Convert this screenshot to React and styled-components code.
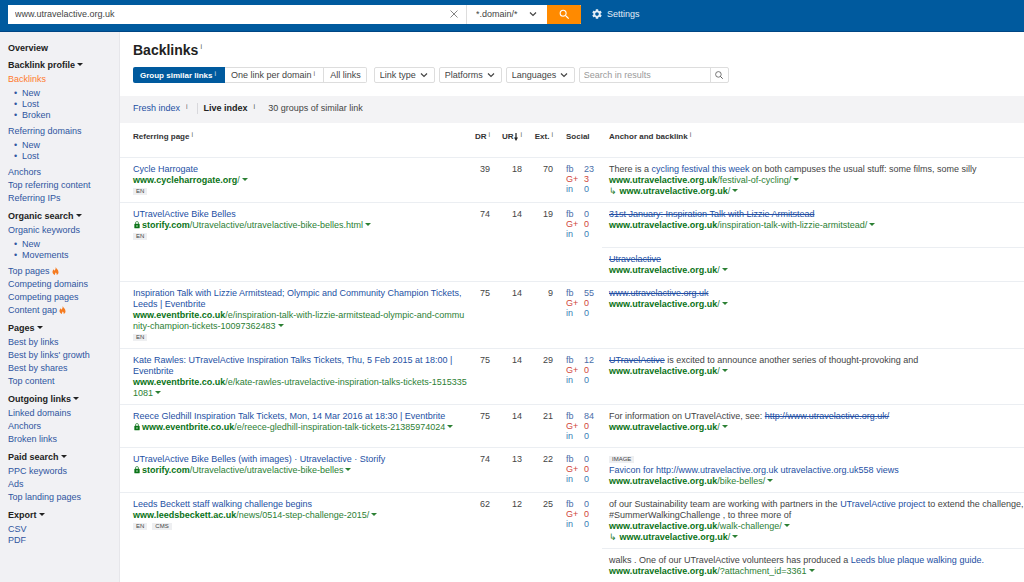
import styled, { createGlobalStyle, css } from 'styled-components';
import { MdLock, MdSearch, MdSettings } from 'react-icons/md';

const menu = [
  {
    title: 'Backlink profile',
    items: [
      { name: 'Backlinks', active: true, sub: ['New', 'Lost', 'Broken'] },
      { name: 'Referring domains', sub: ['New', 'Lost'] },
      { name: 'Anchors' },
      { name: 'Top referring content' },
      { name: 'Referring IPs' },
    ],
  },
  {
    title: 'Organic search',
    items: [
      { name: 'Organic keywords', sub: ['New', 'Movements'] },
      { name: 'Top pages', hot: true },
      { name: 'Competing domains' },
      { name: 'Competing pages' },
      { name: 'Content gap', hot: true },
    ],
  },
  {
    title: 'Pages',
    items: [
      { name: 'Best by links' },
      { name: "Best by links' growth" },
      { name: 'Best by shares' },
      { name: 'Top content' },
    ],
  },
  {
    title: 'Outgoing links',
    items: [{ name: 'Linked domains' }, { name: 'Anchors' }, { name: 'Broken links' }],
  },
  {
    title: 'Paid search',
    items: [{ name: 'PPC keywords' }, { name: 'Ads' }, { name: 'Top landing pages' }],
  },
  {
    title: 'Export',
    dense: true,
    items: [{ name: 'CSV' }, { name: 'PDF' }],
  },
];

const SITE = 'www.utravelactive.org.uk';

const rows = [
  {
    title: 'Cycle Harrogate',
    host: 'www.cycleharrogate.org',
    path: '/',
    tags: ['EN'],
    dr: 39, ur: 18, ext: 70,
    social: [23, 3, 0],
    anchors: [
      {
        before: 'There is a ',
        link: 'cycling festival this week',
        after: ' on both campuses the usual stuff: some films, some silly',
        path: '/festival-of-cycling/',
        redirect: true,
      },
    ],
  },
  {
    title: 'UTravelActive Bike Belles',
    secure: true,
    host: 'storify.com',
    path: '/Utravelactive/utravelactive-bike-belles.html',
    tags: ['EN'],
    dr: 74, ur: 14, ext: 19,
    social: [0, 0, 0],
    anchors: [
      {
        link: '31st January: Inspiration Talk with Lizzie Armitstead',
        lost: true,
        path: '/inspiration-talk-with-lizzie-armitstead/',
      },
      { link: 'Utravelactive', lost: true, path: '/' },
    ],
  },
  {
    title: 'Inspiration Talk with Lizzie Armitstead; Olympic and Community Champion Tickets, Leeds | Eventbrite',
    host: 'www.eventbrite.co.uk',
    path: '/e/inspiration-talk-with-lizzie-armitstead-olympic-and-community-champion-tickets-10097362483',
    tags: ['EN'],
    dr: 75, ur: 14, ext: 9,
    social: [55, 0, 0],
    anchors: [{ link: 'www.utravelactive.org.uk', lost: true, path: '/' }],
  },
  {
    title: 'Kate Rawles: UTravelActive Inspiration Talks Tickets, Thu, 5 Feb 2015 at 18:00 | Eventbrite',
    host: 'www.eventbrite.co.uk',
    path: '/e/kate-rawles-utravelactive-inspiration-talks-tickets-15153351081',
    dr: 75, ur: 14, ext: 29,
    social: [12, 0, 0],
    anchors: [
      {
        link: 'UTravelActive',
        lost: true,
        after: ' is excited to announce another series of thought-provoking and',
        path: '/',
      },
    ],
  },
  {
    title: 'Reece Gledhill Inspiration Talk Tickets, Mon, 14 Mar 2016 at 18:30 | Eventbrite',
    secure: true,
    host: 'www.eventbrite.co.uk',
    path: '/e/reece-gledhill-inspiration-talk-tickets-21385974024',
    dr: 75, ur: 14, ext: 21,
    social: [84, 0, 0],
    anchors: [
      {
        before: 'For information on UTravelActive, see: ',
        link: 'http://www.utravelactive.org.uk/',
        lost: true,
        path: '/',
      },
    ],
  },
  {
    title: 'UTravelActive Bike Belles (with images) · Utravelactive · Storify',
    secure: true,
    host: 'storify.com',
    path: '/Utravelactive/utravelactive-bike-belles',
    dr: 74, ur: 13, ext: 22,
    social: [0, 0, 0],
    anchors: [
      {
        tag: 'IMAGE',
        link: 'Favicon for http://www.utravelactive.org.uk utravelactive.org.uk558 views',
        path: '/bike-belles/',
      },
    ],
  },
  {
    title: 'Leeds Beckett staff walking challenge begins',
    host: 'www.leedsbeckett.ac.uk',
    path: '/news/0514-step-challenge-2015/',
    tags: ['EN', 'CMS'],
    dr: 62, ur: 12, ext: 25,
    social: [0, 0, 0],
    anchors: [
      {
        before: 'of our Sustainability team are working with partners in the ',
        link: 'UTravelActive project',
        after: ' to extend the challenge, #SummerWalkingChallenge , to three more of',
        path: '/walk-challenge/',
        redirect: true,
      },
      {
        before: 'walks . One of our UTravelActive volunteers has produced a ',
        link: 'Leeds blue plaque walking guide.',
        path: '/?attachment_id=3361',
      },
    ],
  },
];

const networks = [
  { name: 'fb', color: '#4a6ea9' },
  { name: 'G+', color: '#d0453a' },
  { name: 'in', color: '#3a7db5' },
];

const Chevron = () => (
  <ChevronSvg viewBox="0 0 8 8" aria-hidden="true">
    <path d="M1 2.5 4 5.5 7 2.5" fill="none" stroke="#444" strokeWidth="1.2" />
  </ChevronSvg>
);

const Flame = () => (
  <FlameSvg viewBox="0 0 14 16" aria-hidden="true">
    <path
      d="M7.4 0C8.300 3.200 13 5.600 13 10.400c0 2.600-1.400 4.600-3.800 5.600.6-1.800.2-3.600-2-5-.2 1.600-1.800 3-1.200 5C3 15.200 1 13.200 1 10.200 1 7.800 2.200 6.600 3 4.600c1 .8 1.400 1.600 1.600 2.800C6.800 5.600 7.800 3 7.400 0Z"
      fill="#f57b20"
    />
  </FlameSvg>
);

const Drop = ({ label }) => (
  <SelectBox>
    <Select aria-label={label} defaultValue={label}>
      <option>{label}</option>
    </Select>
    <Chevron />
  </SelectBox>
);

const Url = ({ secure, redirect, host, path }) => (
  <UrlLine>
    {secure && <Lock aria-hidden="true" />}
    {redirect && '↳ '}
    <a href="#"><b>{host}</b>{path}</a>
    <Caret />
  </UrlLine>
);

const AnchorCell = ({ anchor }) => (
  <Cell $anchor>
    {anchor.tag && <TagLine><Tag>{anchor.tag}</Tag></TagLine>}
    <div>
      {anchor.before}
      <TextLink href="#" $lost={anchor.lost}>{anchor.link}</TextLink>
      {anchor.after}
    </div>
    <Url host={SITE} path={anchor.path} />
    {anchor.redirect && <Url redirect host={SITE} path="/" />}
  </Cell>
);

const Row = ({ row }) => (
  <>
    <tr>
      <Cell $first>
        <div><TextLink href="#">{row.title}</TextLink></div>
        <Url secure={row.secure} host={row.host} path={row.path} />
        {row.tags && (
          <TagLine>{row.tags.map((tag) => <Tag key={tag}>{tag}</Tag>)}</TagLine>
        )}
      </Cell>
      <Cell $num>{row.dr}</Cell>
      <Cell $num>{row.ur}</Cell>
      <Cell $num>{row.ext}</Cell>
      <Cell $social>
        {networks.map((net, i) => (
          <Social key={net.name} $color={net.color}>
            <span>{net.name}</span>
            <span>{row.social[i]}</span>
          </Social>
        ))}
      </Cell>
      <AnchorCell anchor={row.anchors[0]} />
    </tr>
    {row.anchors.slice(1).map((anchor) => (
      <tr key={anchor.link}>
        <td colSpan={5}></td>
        <AnchorCell anchor={anchor} />
      </tr>
    ))}
  </>
);

const App = () => {
  return <>
    <Global />
    <TopBar>
      <SearchForm onSubmit={(e) => e.preventDefault()}>
        <Target type="text" aria-label="Domain or URL" defaultValue="www.utravelactive.org.uk" />
        <Clear type="button" aria-label="Clear">
          <svg viewBox="0 0 8 8" width="8" height="8">
            <path d="M.5.5l7 7M7.500.5l-7 7" stroke="#777" strokeWidth=".9" />
          </svg>
        </Clear>
        <ModeBox>
          <Mode aria-label="Mode" defaultValue="*.domain/*">
            <option>*.domain/*</option>
          </Mode>
          <Chevron />
        </ModeBox>
        <Go type="submit" aria-label="Search"><MdSearch size={13} /></Go>
      </SearchForm>
      <Settings href="#"><MdSettings size={12} />Settings</Settings>
    </TopBar>

    <Layout>
      <Sidebar>
        <Overview href="#">Overview</Overview>
        {menu.map((group) => (
          <Group key={group.title}>
            <GroupTitle>{group.title}<Caret $dark /></GroupTitle>
            <Items>
              {group.items.map((item) => (
                <Item key={item.name} $dense={group.dense}>
                  <MenuLink href="#" $active={item.active}>{item.name}</MenuLink>
                  {item.hot && <Flame />}
                  {item.sub && (
                    <SubItems>
                      {item.sub.map((name) => (
                        <li key={name}><MenuLink href="#">{name}</MenuLink></li>
                      ))}
                    </SubItems>
                  )}
                </Item>
              ))}
            </Items>
          </Group>
        ))}
      </Sidebar>

      <Main>
        <Title>Backlinks<Info>i</Info></Title>
        <Filters>
          <Segments>
            <Segment type="button" $on>Group similar links<Info>i</Info></Segment>
            <Segment type="button">One link per domain<Info>i</Info></Segment>
            <Segment type="button">All links</Segment>
          </Segments>
          <Drop label="Link type" />
          <Drop label="Platforms" />
          <Drop label="Languages" />
          <ResultSearch onSubmit={(e) => e.preventDefault()}>
            <ResultInput type="text" aria-label="Search in results" placeholder="Search in results" />
            <ResultButton type="submit" aria-label="Find">
              <svg viewBox="0 0 8 8" width="8" height="8">
                <circle cx="3.4" cy="3.4" r="2.800" fill="none" stroke="#555" strokeWidth=".8" />
                <path d="M5.400 5.400 7.700 7.700" stroke="#555" strokeWidth="1" />
              </svg>
            </ResultButton>
          </ResultSearch>
        </Filters>

        <IndexBar>
          <Fresh><TextLink href="#">Fresh index</TextLink><Info $wide>i</Info></Fresh>
          <Live><b>Live index</b><Info $wide>i</Info></Live>
          <span>30 groups of similar link</span>
        </IndexBar>

        <Table>
          <colgroup>
            <Col $w={347} />
            <Col $w={23} />
            <Col $w={32} />
            <Col $w={31} />
            <Col $w={49} />
            <col />
          </colgroup>
          <thead>
            <tr>
              <Head $first>Referring page<Info>i</Info></Head>
              <Head $num>DR<Info>i</Info></Head>
              <Head $num>UR<Arrow viewBox="0 0 4 8" aria-hidden="true"><path d="M1.400 0h1.200v4.600H4L2 8 0 4.600h1.400z" /></Arrow><Info>i</Info></Head>
              <Head $num>Ext.<Info>i</Info></Head>
              <Head $social>Social</Head>
              <Head $anchor>Anchor and backlink<Info>i</Info></Head>
            </tr>
          </thead>
          <tbody>
            {rows.map((row) => <Row key={row.title} row={row} />)}
          </tbody>
        </Table>
      </Main>
    </Layout>
  </>;
};

const Global = createGlobalStyle`
  * { box-sizing: border-box; }
  body {
    margin: 0;
    font: 9px/11px "Liberation Sans", Arial, sans-serif;
    color: #444;
    background: #fff;
  }
  a { color: inherit; text-decoration: none; }
  button, input, select { font: inherit; color: inherit; margin: 0; }
`

const TopBar = styled.header`
  display: flex;
  align-items: center;
  gap: 10px;
  height: 32px;
  padding: 0 8px 3px;
  background: #005a9e;
  border-bottom: 1px solid #004684;
`

const SearchForm = styled.form`
  display: flex;
  flex: 0 1 573px;
  height: 19px;
  background: #fff;
`

const Target = styled.input`
  flex: 1;
  min-width: 0;
  padding: 0 7px;
  border: none;
  background: none;
`

const Clear = styled.button`
  display: flex;
  align-items: center;
  padding: 0 8px;
  border: none;
  background: none;
`

const ModeBox = styled.div`
  display: grid;
  align-items: center;
  width: 81px;
  border-left: 1px solid #ddd;
  > * { grid-area: 1 / 1; }
  > svg { justify-self: end; margin-right: 10px; }
`

const Mode = styled.select`
  appearance: none;
  width: 100%;
  height: 100%;
  padding: 0 9px;
  border: none;
  background: none;
`

const Go = styled.button`
  display: flex;
  align-items: center;
  justify-content: center;
  width: 34px;
  border: none;
  border-radius: 0 1px 1px 0;
  background: #ff8a00;
  color: #fff;
`

const Settings = styled.a`
  display: flex;
  align-items: center;
  gap: 4px;
  color: #e3eef7;
`

const Layout = styled.div`
  display: grid;
  grid-template-columns: 120px minmax(0, 1fr);
  min-height: calc(100vh - 32px);
`

const Sidebar = styled.nav`
  padding: 11px 0 0 8px;
  background: #f1f1f4;
  border-right: 1px solid #e6e6ea;
`

const Overview = styled.a`
  display: block;
  margin-bottom: 6px;
  font-weight: bold;
  color: #222;
`

const Group = styled.section`
  margin-bottom: 7px;
`

const GroupTitle = styled.h2`
  margin: 0;
  font-size: 9px;
  line-height: 11px;
  color: #222;
`

const Items = styled.ul`
  margin: 0;
  padding: 0;
  list-style: none;
`

const Item = styled.li`
  margin-top: ${(p) => (p.$dense ? '0' : '2px')};
  &:first-child { margin-top: 3px; }
`

const MenuLink = styled.a`
  color: ${(p) => (p.$active ? '#ff7a2d' : '#2f55a0')};
`

const SubItems = styled.ul`
  margin: 3px 0 5px;
  padding: 0 0 0 6px;
  list-style: none;
  color: #2f55a0;
  li::before {
    content: '•';
    display: inline-block;
    width: 8px;
  }
`

const Main = styled.main`
  min-width: 0;
`

const Title = styled.h1`
  margin: 0;
  padding: 10px 13px 9px;
  font-size: 14px;
  line-height: 16px;
  color: #222;
`

const Info = styled.span`
  margin-left: ${(p) => (p.$wide ? '6px' : '2px')};
  font-size: 7px;
  font-weight: normal;
  line-height: 0;
  vertical-align: 2px;
  opacity: 0.8;
  ${Title} & { vertical-align: 6px; }
`

const Filters = styled.div`
  display: flex;
  flex-wrap: wrap;
  gap: 4px;
  padding: 0 13px 13px;
`

const Segments = styled.div`
  display: flex;
  margin-right: 3px;
`

const Segment = styled.button`
  height: 16px;
  padding: 0 8px 0 6px;
  border: 1px solid #ddd;
  border-left-width: 0;
  background: #fff;
  white-space: nowrap;
  &:last-child {
    padding-right: 5px;
    border-radius: 0 2px 2px 0;
  }
  ${(p) => p.$on && css`
    padding: 0 9px 0 7px;
    border: none;
    border-radius: 2px 0 0 2px;
    background: #005a9e;
    color: #fff;
    font-size: 8px;
    font-weight: bold;
  `}
`

const SelectBox = styled.div`
  display: grid;
  align-items: center;
  height: 16px;
  border: 1px solid #ddd;
  border-radius: 2px;
  > * { grid-area: 1 / 1; }
  > svg { justify-self: end; margin-right: 6px; }
`

const Select = styled.select`
  appearance: none;
  height: 14px;
  padding: 0 17px 0 5px;
  border: none;
  background: none;
`

const ChevronSvg = styled.svg`
  width: 8px;
  height: 8px;
  pointer-events: none;
`

const FlameSvg = styled.svg`
  width: 7px;
  height: 8px;
  margin-left: 2px;
  vertical-align: -1px;
`

const ResultSearch = styled.form`
  display: flex;
  flex: 0 1 150px;
  height: 16px;
  border: 1px solid #ddd;
  border-radius: 2px;
`

const ResultInput = styled.input`
  flex: 1;
  min-width: 0;
  padding: 0 4px;
  border: none;
  background: none;
  &::placeholder { color: #999; opacity: 1; }
`

const ResultButton = styled.button`
  display: flex;
  align-items: center;
  justify-content: center;
  width: 18px;
  padding: 0;
  border: none;
  border-left: 1px solid #ddd;
  background: none;
`

const IndexBar = styled.div`
  display: flex;
  align-items: center;
  height: 27px;
  padding: 0 13px 3px;
  background: #f3f3f5;
`

const Fresh = styled.span`
  padding-right: 9px;
  border-right: 1px solid #d8d8dc;
`

const Live = styled.span`
  padding: 0 13px 0 6px;
  color: #222;
`

const Table = styled.table`
  width: 100%;
  table-layout: fixed;
  border-collapse: separate;
  border-spacing: 0;
`

const Col = styled.col`
  width: ${(p) => p.$w}px;
`

const column = css`
  vertical-align: top;
  text-align: ${(p) => (p.$num ? 'right' : 'left')};
  ${(p) => p.$first && 'padding-left: 13px;'}
  ${(p) => p.$social && 'padding-left: 13px;'}
  ${(p) => p.$anchor && 'padding-left: 7px;'}
`

const Head = styled.th`
  padding: 8px 0 15px;
  font-size: 8px;
  white-space: nowrap;
  color: #333;
  ${column}
`

const Cell = styled.td`
  padding: 6px 0 ${(p) => (p.$social ? '6px' : '5px')};
  border-top: 1px solid #ebeef2;
  ${column}
`

const TextLink = styled.a`
  color: #2450a4;
  text-decoration: ${(p) => (p.$lost ? 'line-through' : 'none')};
`

const UrlLine = styled.div`
  color: #2c8034;
  word-break: break-all;
  b { color: #0a7317; }
`

const Lock = styled(MdLock)`
  width: 8px;
  height: 8px;
  margin-right: 1px;
  vertical-align: -1px;
  color: #0a7317;
`

const Caret = styled.span`
  display: inline-block;
  margin-left: 2px;
  border: solid transparent;
  border-width: 3px 3px 0;
  border-top-color: ${(p) => (p.$dark ? '#222' : '#2c8034')};
  vertical-align: 2px;
`

const Arrow = styled.svg`
  width: 4px;
  height: 8px;
  margin-left: 1px;
  vertical-align: -2px;
  fill: #222;
`

const TagLine = styled.div`
  display: flex;
  align-items: center;
  gap: 5px;
  height: 11px;
`

const Tag = styled.span`
  padding: 0 3px;
  background: #eeeff1;
  font-size: 6px;
  line-height: 7px;
  color: #444;
`

const Social = styled.div`
  display: grid;
  grid-template-columns: 18px 1fr;
  line-height: 10px;
  color: ${(p) => p.$color};
`

export default App;
